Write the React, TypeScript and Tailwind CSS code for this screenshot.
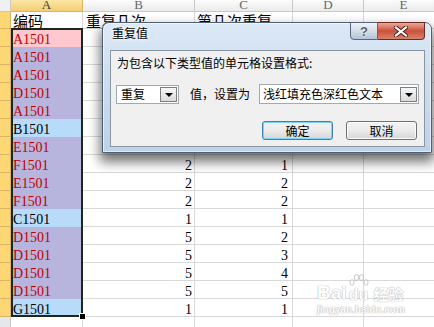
import React from "react";

type Row = { code: string; n: number; k: number };

// 编码 / 重复几次 / 第几次重复
const data: Row[] = [
  { code: "A1501", n: 4, k: 1 },
  { code: "A1501", n: 4, k: 2 },
  { code: "A1501", n: 4, k: 3 },
  { code: "D1501", n: 5, k: 1 },
  { code: "A1501", n: 4, k: 4 },
  { code: "B1501", n: 1, k: 1 },
  { code: "E1501", n: 2, k: 1 },
  { code: "F1501", n: 2, k: 1 },
  { code: "E1501", n: 2, k: 2 },
  { code: "F1501", n: 2, k: 2 },
  { code: "C1501", n: 1, k: 1 },
  { code: "D1501", n: 5, k: 2 },
  { code: "D1501", n: 5, k: 3 },
  { code: "D1501", n: 5, k: 4 },
  { code: "D1501", n: 5, k: 5 },
  { code: "G1501", n: 1, k: 1 },
];

const serif = "font-['Liberation_Serif','Noto_Sans_CJK_SC',serif]";
const cjk = "font-['Noto_Sans_CJK_SC',sans-serif]";
const grid = "border-r border-b border-[#d9d9d9]";

function ColHead({ w, label, active }: { w: string; label: string; active?: boolean }) {
  return (
    <div
      className={`${w} shrink-0 h-[12px] flex justify-center border-r border-b ${serif} text-[13px] leading-[9px] ${
        active
          ? "bg-gradient-to-b from-[#fbe6a6] to-[#f5cd72] border-[#e2b45a] text-[#3c3c3c]"
          : "bg-gradient-to-b from-[#fcfcfc] to-[#ebebeb] border-[#c9c9c9] text-[#666]"
      }`}
    >
      {label}
    </div>
  );
}

function DropArrow() {
  return (
    <div className="ml-auto mr-[1px] w-[17px] h-[15px] border border-[#7f7f7f] bg-gradient-to-b from-[#f7f7f7] to-[#dadada] flex items-end justify-center pb-[4px]">
      <div className="w-0 h-0 border-l-[4px] border-r-[4px] border-t-[4px] border-l-transparent border-r-transparent border-t-black" />
    </div>
  );
}

function Dialog() {
  return (
    <div className="absolute left-[102px] top-[22px] w-[330px] h-[131px] rounded-t-[7px] border border-[#4f5f72] bg-gradient-to-b from-[#dce9f6] via-[#cadcef] to-[#bcd2e9] shadow-[0_7px_12px_2px_rgba(0,0,0,0.55),inset_0_0_0_1px_rgba(255,255,255,0.55)] flex flex-col pl-[7px] pr-[6px] pb-[5px]">
      {/* title bar */}
      <div className="h-[27px] flex items-start">
        <div className={`pl-[2px] pt-[3px] ${cjk} text-[12px] leading-[14px] text-black [text-shadow:0_0_5px_#fff,0_0_3px_#fff]`}>
          重复值
        </div>
        <div className="ml-auto -mt-[1px] flex">
          <div className="w-[28px] h-[18px] border border-[#55687f] rounded-bl-[4px] bg-gradient-to-b from-[#eef2f7] via-[#d3dde8] to-[#b3c4d8] flex items-center justify-center font-['Liberation_Sans',sans-serif] font-bold text-[13px] leading-none text-[#59636f] [text-shadow:0_0_2px_#fff]">
            ?
          </div>
          <div className="w-[47px] h-[18px] border border-l-0 border-[#6e2a21] rounded-br-[4px] bg-gradient-to-b from-[#eba896] via-[#c9503a] to-[#d9826a] flex items-center justify-center">
            <svg width="14" height="11" viewBox="0 0 14 11">
              <path d="M2 1.5 L12 9.5 M12 1.5 L2 9.5" stroke="#4a1a14" strokeWidth="4" strokeLinecap="square" />
              <path d="M2 1.5 L12 9.5 M12 1.5 L2 9.5" stroke="#fff" strokeWidth="2.2" strokeLinecap="square" />
            </svg>
          </div>
        </div>
      </div>

      {/* client area */}
      <div className={`flex-1 border border-[#8a95a2] bg-[#f0f0f0] flex flex-col pl-[5px] pr-[5px] ${cjk} text-[12px] text-black`}>
        <div className="pt-[4px] pl-[1px] leading-[16px]">为包含以下类型值的单元格设置格式:</div>

        <div className="mt-[13px] h-[20px] flex items-center">
          <div className="w-[63px] h-[19px] border border-[#a3a9b1] bg-white flex items-center pl-[4px] leading-[16px]">
            重复
            <DropArrow />
          </div>
          <div className="ml-[11px] leading-[16px]">值，设置为</div>
          <div className="ml-[9px] w-[160px] h-[20px] border border-[#a3a9b1] bg-white flex items-center pl-[3px] leading-[16px]">
            浅红填充色深红色文本
            <DropArrow />
          </div>
        </div>

        <div className="mt-[17px] flex justify-end gap-[13px] pr-[2px]">
          <div className="w-[71px] h-[19px] rounded-[3px] border border-[#3c7fb1] shadow-[inset_0_0_0_1px_#7fd3f6] bg-gradient-to-b from-[#f3f3f3] via-[#ebebeb] to-[#d6d6d6] flex items-center justify-center leading-[16px]">
            确定
          </div>
          <div className="w-[71px] h-[19px] rounded-[3px] border border-[#707070] shadow-[inset_0_0_0_1px_#fbfbfb] bg-gradient-to-b from-[#f3f3f3] via-[#ebebeb] to-[#d6d6d6] flex items-center justify-center leading-[16px]">
            取消
          </div>
        </div>
      </div>
    </div>
  );
}

function Watermark() {
  return (
    <div className="absolute left-[317px] top-[272px] flex flex-col text-white [text-shadow:0_0_1px_#9a9a9a,0_0_1px_#9a9a9a] opacity-80">
      <div className="flex items-end h-[30px]">
        <span className="font-['Liberation_Sans',sans-serif] font-bold text-[19px] leading-[18px]">Bai</span>
        <div className="flex flex-col items-center ml-[2px]">
          <svg width="20" height="13" viewBox="0 0 20 13">
            <g fill="#fff" stroke="#a8a8a8" strokeWidth="0.8">
              <ellipse cx="3" cy="8.5" rx="2" ry="2.8" />
              <ellipse cx="7.5" cy="3.5" rx="2.2" ry="3" />
              <ellipse cx="12.5" cy="3.5" rx="2.2" ry="3" />
              <ellipse cx="17" cy="8.5" rx="2" ry="2.8" />
            </g>
          </svg>
          <span className="font-['Liberation_Sans',sans-serif] font-bold text-[16px] leading-[15px]">du</span>
        </div>
        <span className={`${cjk} font-bold text-[15px] leading-[16px] ml-[5px]`}>经验</span>
      </div>
      <span className="font-['Liberation_Sans',sans-serif] font-bold text-[10px] leading-[12px] mt-[2px]">jingyan.baidu.com</span>
    </div>
  );
}

export default function App() {
  return (
    <div className="relative w-[434px] h-[327px] overflow-hidden bg-white">
      {/* column headers */}
      <div className="flex">
        <div className="w-[11px] h-[12px] shrink-0 border-r border-b border-[#c9c9c9] bg-[#eef0f2]" />
        <ColHead w="w-[72px]" label="A" active />
        <ColHead w="w-[112px]" label="B" />
        <ColHead w="w-[98px]" label="C" />
        <ColHead w="w-[71px]" label="D" />
        <ColHead w="w-[80px]" label="E" />
      </div>

      {/* row 1 */}
      <div className={`flex h-[17px] ${cjk} text-[15px] leading-[17px]`}>
        <div className="w-[11px] shrink-0 bg-[#fcd774] border-r border-b border-[#dcb460]" />
        <div className={`w-[72px] shrink-0 pl-[2px] ${grid}`}>编码</div>
        <div className={`w-[112px] shrink-0 pl-[3px] ${grid} whitespace-nowrap`}>重复几次</div>
        <div className={`w-[98px] shrink-0 pl-[2px] ${grid} whitespace-nowrap`}>第几次重复</div>
        <div className={`w-[71px] shrink-0 ${grid}`} />
        <div className={`w-[80px] shrink-0 ${grid}`} />
      </div>

      {/* data rows */}
      {data.map((r, i) => {
        const fill = i === 0 ? "bg-[#ffc7ce]" : r.n > 1 ? "bg-[#b7b4dd]" : "bg-[#b9dbfa]";
        const color = r.n > 1 ? "text-[#c00000]" : "text-black";
        return (
          <div key={i} className={`flex h-[18px] ${serif} text-[14px] leading-[14px]`}>
            <div className="w-[11px] shrink-0 bg-[#fcd774] border-r border-b border-[#dcb460]" />
            <div className={`w-[72px] shrink-0 pl-[2px] pt-[4px] ${fill} ${color}`}>{r.code}</div>
            <div className={`w-[112px] shrink-0 pr-[2px] pt-[4px] text-right ${grid}`}>{r.n}</div>
            <div className={`w-[98px] shrink-0 pr-[4px] pt-[4px] text-right ${grid}`}>{r.k}</div>
            <div className={`w-[71px] shrink-0 ${grid}`} />
            <div className={`w-[80px] shrink-0 ${grid}`} />
          </div>
        );
      })}

      {/* row 18 */}
      <div className="flex h-[18px]">
        <div className="w-[11px] shrink-0 bg-[#e4e7eb] border-r border-b border-[#c9c9c9]" />
        <div className={`w-[72px] shrink-0 ${grid}`} />
        <div className={`w-[112px] shrink-0 ${grid}`} />
        <div className={`w-[98px] shrink-0 ${grid}`} />
        <div className={`w-[71px] shrink-0 ${grid}`} />
        <div className={`w-[80px] shrink-0 ${grid}`} />
      </div>

      {/* selection frame + fill handle */}
      <div className="absolute left-[11px] top-[28px] w-[72px] h-[289px] border-2 border-[#1c261c]" />
      <div className="absolute left-[79px] top-[313px] w-[7px] h-[7px] bg-black border border-white" />

      <Dialog />
      <Watermark />
    </div>
  );
}
